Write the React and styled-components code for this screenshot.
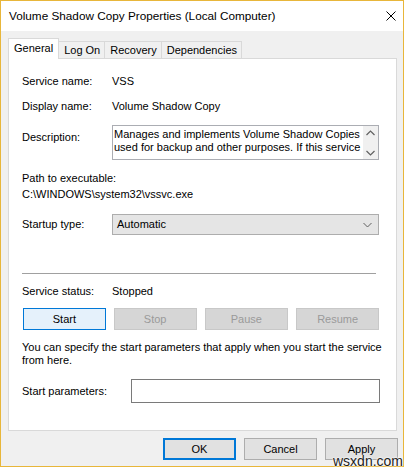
import React from "react";
import styled, { createGlobalStyle } from "styled-components";

const GlobalStyle = createGlobalStyle`
  html, body { margin: 0; padding: 0; background: #ffffff; }
  body { font-family: "Liberation Sans", Arial, sans-serif; font-size: 11px; color: #000; }
  * { box-sizing: border-box; }
`;

const Window = styled.div`
  position: relative;
  width: 404px;
  height: 467px;
  border: 1px solid #e8b63a;
  background: #f0f0f0;
  display: flex;
  flex-direction: column;
`;

const TitleBar = styled.div`
  height: 30px;
  background: #ffffff;
  display: flex;
  align-items: center;
  justify-content: space-between;
  padding: 0 7px 1px 8px;
`;

const Title = styled.span`
  font-size: 11.75px;
  line-height: 15px;
`;

const CloseIcon = styled.svg`
  width: 10px;
  height: 10px;
  display: block;
`;

const Body = styled.div`
  padding: 7px 6px 0 7px;
  display: flex;
  flex-direction: column;
`;

const TabStrip = styled.div`
  display: flex;
  align-items: flex-end;
  height: 21px;
  margin-bottom: -1px;
  position: relative;
  z-index: 1;
`;

const Tab = styled.div`
  height: ${(p) => (p.$active ? 21 : 18)}px;
  padding: ${(p) => (p.$active ? "2px 5px 0" : "1px 4px 0 5px")};
  margin-left: ${(p) => (p.$first ? 0 : -1)}px;
  background: ${(p) => (p.$active ? "#ffffff" : "#f0f0f0")};
  border: 1px solid #d9d9d9;
  border-bottom: ${(p) => (p.$active ? "none" : "1px solid #d9d9d9")};
  line-height: 15px;
  white-space: nowrap;
  position: relative;
  z-index: ${(p) => (p.$active ? 2 : 1)};
`;

const Panel = styled.div`
  height: 373px;
  background: #ffffff;
  border: 1px solid #d9d9d9;
  padding: 0 17px 0 13px;
  display: flex;
  flex-direction: column;
`;

const Row = styled.div`
  display: flex;
  align-items: ${(p) => (p.$top ? "flex-start" : "center")};
  margin-top: ${(p) => p.$mt || 0}px;
  line-height: 15px;
`;

const Label = styled.div`
  width: 90px;
  flex: none;
  white-space: nowrap;
  padding-top: ${(p) => p.$pt || 0}px;
`;

const Text = styled.div`
  margin-top: ${(p) => p.$mt || 0}px;
  line-height: ${(p) => p.$lh || 15}px;
  white-space: nowrap;
`;

const DescBox = styled.div`
  width: 267px;
  height: 35px;
  border: 1px solid #abadb3;
  display: flex;
  overflow: hidden;
`;

const DescText = styled.div`
  flex: 1;
  padding: 2px 0 0 1px;
  line-height: 12.5px;
  white-space: nowrap;
  overflow: hidden;
`;

const ScrollBar = styled.div`
  width: 15px;
  background: #f0f0f0;
  display: flex;
  flex-direction: column;
  align-items: center;
  justify-content: space-between;
  padding: 4px 0 3px;
`;

const Arrow = styled.svg`
  width: 9px;
  height: 6px;
  display: block;
`;

const Combo = styled.div`
  width: 267px;
  height: 21px;
  background: #e5e5e5;
  border: 1px solid #adadad;
  display: flex;
  align-items: center;
  justify-content: space-between;
  padding: 0 6px 0 4px;
`;

const Separator = styled.div`
  height: 1px;
  background: #a0a0a0;
  margin: 38px 3px 0 0;
`;

const ButtonRow = styled.div`
  display: flex;
  gap: 8px;
  margin-top: ${(p) => p.$mt || 0}px;
  padding-left: ${(p) => p.$pl || 0}px;
`;

const Button = styled.div`
  width: ${(p) => p.$w}px;
  height: 22px;
  display: flex;
  align-items: center;
  justify-content: center;
  color: ${(p) => (p.$disabled ? "#9a9a9a" : "#000")};
  background: ${(p) =>
    p.$focus ? "#e5f1fb" : p.$disabled ? "#d6d6d6" : "#e1e1e1"};
  border: ${(p) =>
    p.$default
      ? "2px solid #0078d7"
      : p.$focus
      ? "1px solid #0078d7"
      : p.$disabled
      ? "1px solid #c8c8c8"
      : "1px solid #adadad"};
`;

const Input = styled.div`
  width: 249px;
  height: 24px;
  border: 1px solid #7a7a7a;
  background: #fff;
  margin-left: auto;
  margin-right: -1px;
`;

const Footer = styled.div`
  display: flex;
  justify-content: flex-end;
  gap: 8px;
  margin-top: 7px;
  margin-right: -1px;
`;

const Watermark = styled.div`
  position: absolute;
  left: 332px;
  top: 453px;
  font-size: 14px;
  line-height: 14px;
  color: #222;
  text-shadow: 0 0 2px #fff, 0 0 2px #fff, 0 0 1px #fff;
`;

export default function App() {
  return (
    <>
      <GlobalStyle />
      <Window>
        <TitleBar>
          <Title>Volume Shadow Copy Properties (Local Computer)</Title>
          <CloseIcon viewBox="0 0 10 10">
            <path d="M0.5 0.5 L9.5 9.5 M9.5 0.5 L0.5 9.5" stroke="#000" strokeWidth="1" fill="none" />
          </CloseIcon>
        </TitleBar>
        <Body>
          <TabStrip>
            <Tab $active $first>General</Tab>
            <Tab>Log On</Tab>
            <Tab>Recovery</Tab>
            <Tab>Dependencies</Tab>
          </TabStrip>
          <Panel>
            <Row $mt={15}>
              <Label>Service name:</Label>
              <span>VSS</span>
            </Row>
            <Row $mt={10}>
              <Label>Display name:</Label>
              <span>Volume Shadow Copy</span>
            </Row>
            <Row $mt={11} $top>
              <Label $pt={5}>Description:</Label>
              <DescBox>
                <DescText>
                  Manages and implements Volume Shadow Copies
                  <br />
                  used for backup and other purposes. If this service
                </DescText>
                <ScrollBar>
                  <Arrow viewBox="0 0 9 6">
                    <path d="M0.5 5 L4.5 1 L8.5 5" stroke="#606060" strokeWidth="1.2" fill="none" />
                  </Arrow>
                  <Arrow viewBox="0 0 9 6">
                    <path d="M0.5 1 L4.5 5 L8.5 1" stroke="#606060" strokeWidth="1.2" fill="none" />
                  </Arrow>
                </ScrollBar>
              </DescBox>
            </Row>
            <Text $mt={11}>Path to executable:</Text>
            <Text $mt={1}>C:\WINDOWS\system32\vssvc.exe</Text>
            <Row $mt={12}>
              <Label>Startup type:</Label>
              <Combo>
                <span>Automatic</span>
                <Arrow viewBox="0 0 9 6">
                  <path d="M0.5 1 L4.5 5 L8.5 1" stroke="#606060" strokeWidth="1" fill="none" />
                </Arrow>
              </Combo>
            </Row>
            <Separator />
            <Row $mt={10}>
              <Label>Service status:</Label>
              <span>Stopped</span>
            </Row>
            <ButtonRow $mt={9} $pl={1}>
              <Button $w={83} $focus>Start</Button>
              <Button $w={83} $disabled>Stop</Button>
              <Button $w={84} $disabled>Pause</Button>
              <Button $w={83} $disabled>Resume</Button>
            </ButtonRow>
            <Text $mt={11} $lh={13}>
              You can specify the start parameters that apply when you start the service
              <br />
              from here.
            </Text>
            <Row $mt={12}>
              <Label>Start parameters:</Label>
              <Input />
            </Row>
          </Panel>
          <Footer>
            <Button $w={73} $default>OK</Button>
            <Button $w={73}>Cancel</Button>
            <Button $w={73}>Apply</Button>
          </Footer>
        </Body>
        <Watermark>wsxdn.com</Watermark>
      </Window>
    </>
  );
}
